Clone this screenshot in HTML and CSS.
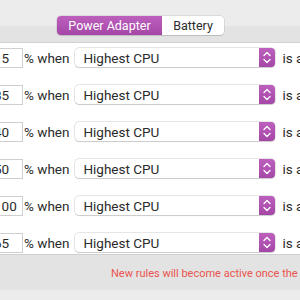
FILE: index.html
```html
<!DOCTYPE html>
<html lang="en">
<head>
    <meta charset="UTF-8">
    <link rel="stylesheet" href="styles.css">
</head>
<body>
    <div class="window">
        <div class="tab-header">
            <div class="segmented">
                <span class="segment active">Power Adapter</span>
                <span class="segment">Battery</span>
            </div>
        </div>

        <div class="rules">
            <div class="rule">
                <div class="number">15</div>
                <span class="label">% when</span>
                <div class="popup">
                    <span class="popup-text">Highest CPU</span>
                    <span class="stepper">
                        <svg width="16" height="19" viewBox="0 0 16 19"><path d="M5 7.5 L8 4.5 L11 7.5 M5 11.5 L8 14.5 L11 11.5" fill="none" stroke="#fff" stroke-width="1.3" stroke-linecap="round" stroke-linejoin="round"/></svg>
                    </span>
                </div>
                <span class="label">is above</span>
            </div>
            <div class="rule">
                <div class="number">85</div>
                <span class="label">% when</span>
                <div class="popup">
                    <span class="popup-text">Highest CPU</span>
                    <span class="stepper">
                        <svg width="16" height="19" viewBox="0 0 16 19"><path d="M5 7.5 L8 4.5 L11 7.5 M5 11.5 L8 14.5 L11 11.5" fill="none" stroke="#fff" stroke-width="1.3" stroke-linecap="round" stroke-linejoin="round"/></svg>
                    </span>
                </div>
                <span class="label">is above</span>
            </div>
            <div class="rule">
                <div class="number">40</div>
                <span class="label">% when</span>
                <div class="popup">
                    <span class="popup-text">Highest CPU</span>
                    <span class="stepper">
                        <svg width="16" height="19" viewBox="0 0 16 19"><path d="M5 7.5 L8 4.5 L11 7.5 M5 11.5 L8 14.5 L11 11.5" fill="none" stroke="#fff" stroke-width="1.3" stroke-linecap="round" stroke-linejoin="round"/></svg>
                    </span>
                </div>
                <span class="label">is above</span>
            </div>
            <div class="rule">
                <div class="number">50</div>
                <span class="label">% when</span>
                <div class="popup">
                    <span class="popup-text">Highest CPU</span>
                    <span class="stepper">
                        <svg width="16" height="19" viewBox="0 0 16 19"><path d="M5 7.5 L8 4.5 L11 7.5 M5 11.5 L8 14.5 L11 11.5" fill="none" stroke="#fff" stroke-width="1.3" stroke-linecap="round" stroke-linejoin="round"/></svg>
                    </span>
                </div>
                <span class="label">is above</span>
            </div>
            <div class="rule">
                <div class="number">100</div>
                <span class="label">% when</span>
                <div class="popup">
                    <span class="popup-text">Highest CPU</span>
                    <span class="stepper">
                        <svg width="16" height="19" viewBox="0 0 16 19"><path d="M5 7.5 L8 4.5 L11 7.5 M5 11.5 L8 14.5 L11 11.5" fill="none" stroke="#fff" stroke-width="1.3" stroke-linecap="round" stroke-linejoin="round"/></svg>
                    </span>
                </div>
                <span class="label">is above</span>
            </div>
            <div class="rule">
                <div class="number">65</div>
                <span class="label">% when</span>
                <div class="popup">
                    <span class="popup-text">Highest CPU</span>
                    <span class="stepper">
                        <svg width="16" height="19" viewBox="0 0 16 19"><path d="M5 7.5 L8 4.5 L11 7.5 M5 11.5 L8 14.5 L11 11.5" fill="none" stroke="#fff" stroke-width="1.3" stroke-linecap="round" stroke-linejoin="round"/></svg>
                    </span>
                </div>
                <span class="label">is above</span>
            </div>
        </div>

        <div class="notice">
            <p class="notice-text">New rules will become active once the app is restarted.</p>
        </div>
        <div class="bottom-strip"></div>
    </div>
</body>
</html>
```

FILE: styles.css
```css
body {
    margin: 0;
    padding: 0;
    font-family: Roboto, "Liberation Sans", sans-serif;
    font-size: 13px;
    color: #2b2b2b;
    background-color: #ececec;
}

.window {
    width: 300px;
    height: 300px;
    overflow: hidden;
    display: flex;
    flex-direction: column;
}

.tab-header {
    height: 43px;
    flex-shrink: 0;
    background: linear-gradient(#ececec 0, #ececec 25px, #e3e3e3 27px, #e3e3e3 100%);
    border-bottom: 1px solid #d2d2d2;
    box-sizing: border-box;
    padding-top: 16px;
    padding-left: 57px;
}

.segmented {
    display: flex;
    width: 167px;
    height: 19px;
    border-radius: 4px;
    background-color: #fff;
    box-shadow: 0 0 0 0.5px rgba(0, 0, 0, 0.15), 0 1px 1px rgba(0, 0, 0, 0.1);
    overflow: hidden;
    font-size: 12.5px;
}

.segment {
    display: flex;
    align-items: center;
    justify-content: center;
    height: 19px;
    width: 62px;
}

.segment.active {
    width: 105px;
    color: #fff;
    background: linear-gradient(#bc5fbd, #a447a6);
}

.rules {
    height: 212px;
    flex-shrink: 0;
    background-color: #fff;
    border-bottom: 1px solid #d0d0d0;
    box-sizing: border-box;
    padding-top: 5px;
    display: flex;
    flex-direction: column;
    gap: 18px;
}

.rule {
    display: flex;
    align-items: center;
    height: 19px;
    margin-left: -10px;
    white-space: nowrap;
}

.number {
    width: 33px;
    height: 20px;
    box-sizing: border-box;
    border: 1px solid #cfcfcf;
    padding: 0 0 0 3px;
    line-height: 18px;
    flex-shrink: 0;
    font-size: 13.5px;
}

.label {
    margin-left: 1px;
    flex-shrink: 0;
    font-size: 13.5px;
}

.popup {
    display: flex;
    align-items: center;
    width: 200px;
    height: 19px;
    margin-left: 6px;
    margin-right: 6px;
    border-radius: 4px;
    background-color: #fff;
    box-shadow: 0 0 0 0.5px rgba(0, 0, 0, 0.2), 0 1px 1px rgba(0, 0, 0, 0.12);
    flex-shrink: 0;
    overflow: hidden;
}

.popup-text {
    flex: 1;
    padding-left: 8px;
    font-size: 13.5px;
}

.stepper {
    width: 16px;
    height: 19px;
    display: flex;
    background: linear-gradient(#bc5fbd, #a447a6);
}

.notice {
    height: 35px;
    flex-shrink: 0;
    background-color: #e3e3e3;
    display: flex;
    align-items: center;
}

.notice-text {
    margin: 0 0 0 111px;
    white-space: nowrap;
    color: #e8554e;
    font-size: 11px;
    padding-top: 2px;
}

.bottom-strip {
    flex: 1;
    background-color: #ececec;
}
```
